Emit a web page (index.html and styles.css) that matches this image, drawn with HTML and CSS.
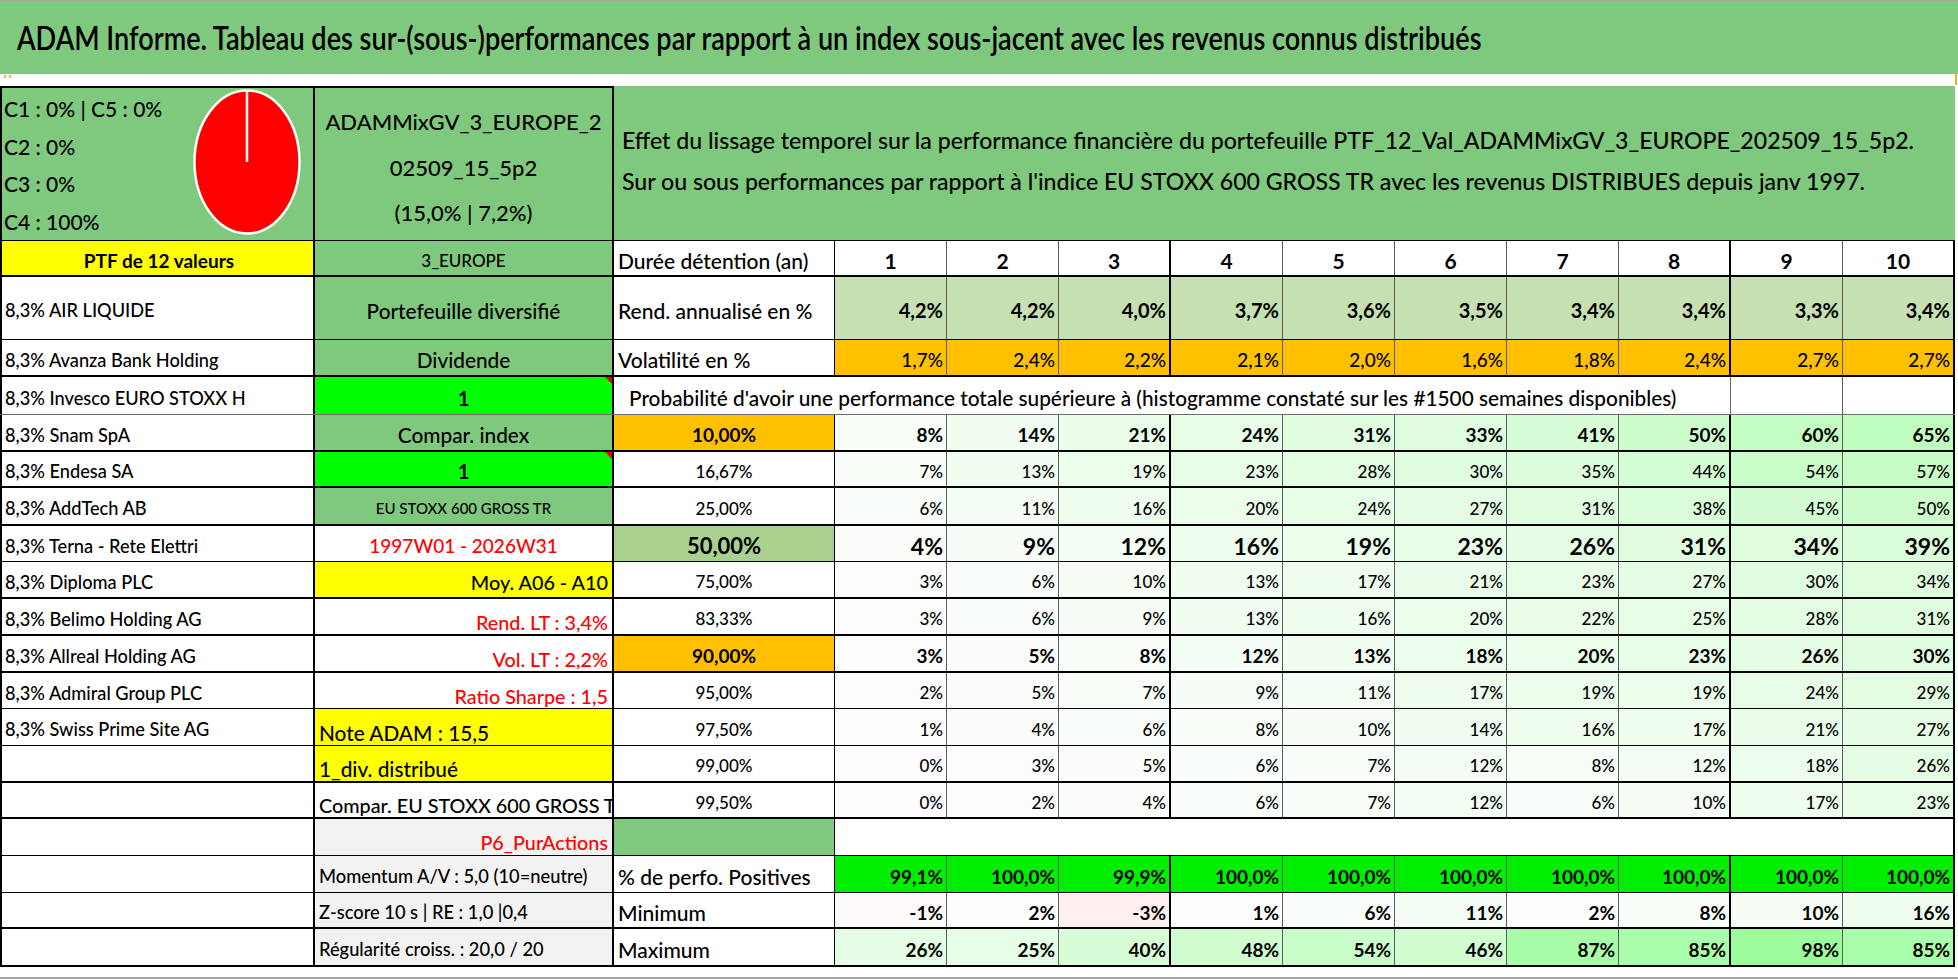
FILE: index.html
```html
<!DOCTYPE html>
<html lang="fr">
<head>
<meta charset="utf-8">
<title>ADAM Informe</title>
<link rel="stylesheet" href="styles.css">
</head>
<body>
<div class="sheet">
  <div class="title"><span class="title-text">ADAM Informe. Tableau des sur-(sous-)performances par rapport à un index sous-jacent avec les revenus connus distribués</span></div>
  <div class="strip"><span class="marks"><i></i><i></i></span><span class="edge"></span></div>

  <div class="head">
    <div class="h-a">
      <div class="classes">
        <div>C1 : 0% | C5 : 0%</div>
        <div>C2 : 0%</div>
        <div>C3 : 0%</div>
        <div>C4 : 100%</div>
      </div>
      <svg class="pie" width="108" height="146" viewBox="0 0 108 146"><ellipse cx="54" cy="73" rx="52.5" ry="71.5" fill="#ff0000" stroke="#ffffff" stroke-width="2.5"/><line x1="54" y1="73" x2="54" y2="2" stroke="#ffffff" stroke-width="2.5"/></svg>
    </div>
    <div class="h-b">ADAMMixGV_3_EUROPE_2<br>02509_15_5p2<br>(15,0% | 7,2%)</div>
    <div class="h-c">Effet du lissage temporel sur la performance financière du portefeuille PTF_12_Val_ADAMMixGV_3_EUROPE_202509_15_5p2.<br>Sur ou sous performances par rapport à l'indice EU STOXX 600 GROSS TR avec les revenus DISTRIBUES depuis janv 1997.</div>
  </div>

  <div class="table">
    <div class="row h36 bk hdr">
      <div class="c a yel ctr ptf">PTF de 12 valeurs</div>
      <div class="c b grn ctr f17">3_EUROPE</div>
      <div class="c lab">Durée détention (an)</div>
      <div class="c n">1</div><div class="c n">2</div><div class="c n t">3</div><div class="c n">4</div><div class="c n">5</div><div class="c n">6</div><div class="c n">7</div><div class="c n t">8</div><div class="c n">9</div><div class="c n t">10</div>
    </div>

    <div class="row h63 tn rend">
      <div class="c a">8,3% AIR LIQUIDE</div>
      <div class="c b grn ctr f21">Portefeuille diversifié</div>
      <div class="c lab">Rend. annualisé en %</div>
      <div class="c n">4,2%</div><div class="c n">4,2%</div><div class="c n t">4,0%</div><div class="c n">3,7%</div><div class="c n">3,6%</div><div class="c n">3,5%</div><div class="c n">3,4%</div><div class="c n t">3,4%</div><div class="c n">3,3%</div><div class="c n t">3,4%</div>
    </div>

    <div class="row h37 bk vol">
      <div class="c a">8,3% Avanza Bank Holding</div>
      <div class="c b grn ctr f21">Dividende</div>
      <div class="c lab">Volatilité en %</div>
      <div class="c n">1,7%</div><div class="c n">2,4%</div><div class="c n t">2,2%</div><div class="c n">2,1%</div><div class="c n">2,0%</div><div class="c n">1,6%</div><div class="c n">1,8%</div><div class="c n t">2,4%</div><div class="c n">2,7%</div><div class="c n t">2,7%</div>
    </div>

    <div class="row h38 tg">
      <div class="c a">8,3% Invesco EURO STOXX H</div>
      <div class="c b lime ctr one note">1</div>
      <div class="c prob">Probabilité d'avoir une performance totale supérieure à (histogramme constaté sur les #1500 semaines disponibles)</div>
      <div class="c n"></div><div class="c n t"></div>
    </div>

    <div class="row h37 bk rb">
      <div class="c a">8,3% Snam SpA</div>
      <div class="c b grn ctr f21">Compar. index</div>
      <div class="c pc org">10,00%</div>
      <div class="c n s" style="--v:8">8%</div><div class="c n s" style="--v:14">14%</div><div class="c n s t" style="--v:21">21%</div><div class="c n s" style="--v:24">24%</div><div class="c n s" style="--v:31">31%</div><div class="c n s" style="--v:33">33%</div><div class="c n s" style="--v:41">41%</div><div class="c n s t" style="--v:50">50%</div><div class="c n s" style="--v:60">60%</div><div class="c n s t" style="--v:65">65%</div>
    </div>

    <div class="row h36 bk rr">
      <div class="c a">8,3% Endesa SA</div>
      <div class="c b lime ctr one note">1</div>
      <div class="c pc">16,67%</div>
      <div class="c n s" style="--v:7">7%</div><div class="c n s" style="--v:13">13%</div><div class="c n s t" style="--v:19">19%</div><div class="c n s" style="--v:23">23%</div><div class="c n s" style="--v:28">28%</div><div class="c n s" style="--v:30">30%</div><div class="c n s" style="--v:35">35%</div><div class="c n s t" style="--v:44">44%</div><div class="c n s" style="--v:54">54%</div><div class="c n s t" style="--v:57">57%</div>
    </div>

    <div class="row h38 bk rr">
      <div class="c a">8,3% AddTech AB</div>
      <div class="c b grn ctr f15">EU STOXX 600 GROSS TR</div>
      <div class="c pc">25,00%</div>
      <div class="c n s" style="--v:6">6%</div><div class="c n s" style="--v:11">11%</div><div class="c n s t" style="--v:16">16%</div><div class="c n s" style="--v:20">20%</div><div class="c n s" style="--v:24">24%</div><div class="c n s" style="--v:27">27%</div><div class="c n s" style="--v:31">31%</div><div class="c n s t" style="--v:38">38%</div><div class="c n s" style="--v:45">45%</div><div class="c n s t" style="--v:50">50%</div>
    </div>

    <div class="row h36 tn rl">
      <div class="c a">8,3% Terna - Rete Elettri</div>
      <div class="c b ctr red f19">1997W01 - 2026W31</div>
      <div class="c pc olive">50,00%</div>
      <div class="c n s" style="--v:4">4%</div><div class="c n s" style="--v:9">9%</div><div class="c n s t" style="--v:12">12%</div><div class="c n s" style="--v:16">16%</div><div class="c n s" style="--v:19">19%</div><div class="c n s" style="--v:23">23%</div><div class="c n s" style="--v:26">26%</div><div class="c n s t" style="--v:31">31%</div><div class="c n s" style="--v:34">34%</div><div class="c n s t" style="--v:39">39%</div>
    </div>

    <div class="row h37 bk rr">
      <div class="c a">8,3% Diploma PLC</div>
      <div class="c b yel rt f20">Moy. A06 - A10</div>
      <div class="c pc">75,00%</div>
      <div class="c n s" style="--v:3">3%</div><div class="c n s" style="--v:6">6%</div><div class="c n s t" style="--v:10">10%</div><div class="c n s" style="--v:13">13%</div><div class="c n s" style="--v:17">17%</div><div class="c n s" style="--v:21">21%</div><div class="c n s" style="--v:23">23%</div><div class="c n s t" style="--v:27">27%</div><div class="c n s" style="--v:30">30%</div><div class="c n s t" style="--v:34">34%</div>
    </div>

    <div class="row h37 bk rr">
      <div class="c a">8,3% Belimo Holding AG</div>
      <div class="c b rt red f20 lo">Rend. LT : 3,4%</div>
      <div class="c pc">83,33%</div>
      <div class="c n s" style="--v:3">3%</div><div class="c n s" style="--v:6">6%</div><div class="c n s t" style="--v:9">9%</div><div class="c n s" style="--v:13">13%</div><div class="c n s" style="--v:16">16%</div><div class="c n s" style="--v:20">20%</div><div class="c n s" style="--v:22">22%</div><div class="c n s t" style="--v:25">25%</div><div class="c n s" style="--v:28">28%</div><div class="c n s t" style="--v:31">31%</div>
    </div>

    <div class="row h37 bk rb">
      <div class="c a">8,3% Allreal Holding AG</div>
      <div class="c b rt red f20 lo">Vol. LT : 2,2%</div>
      <div class="c pc org">90,00%</div>
      <div class="c n s" style="--v:3">3%</div><div class="c n s" style="--v:5">5%</div><div class="c n s t" style="--v:8">8%</div><div class="c n s" style="--v:12">12%</div><div class="c n s" style="--v:13">13%</div><div class="c n s" style="--v:18">18%</div><div class="c n s" style="--v:20">20%</div><div class="c n s t" style="--v:23">23%</div><div class="c n s" style="--v:26">26%</div><div class="c n s t" style="--v:30">30%</div>
    </div>

    <div class="row h36 tn rr">
      <div class="c a">8,3% Admiral Group PLC</div>
      <div class="c b rt red f20 lo">Ratio Sharpe : 1,5</div>
      <div class="c pc">95,00%</div>
      <div class="c n s" style="--v:2">2%</div><div class="c n s" style="--v:5">5%</div><div class="c n s t" style="--v:7">7%</div><div class="c n s" style="--v:9">9%</div><div class="c n s" style="--v:11">11%</div><div class="c n s" style="--v:17">17%</div><div class="c n s" style="--v:19">19%</div><div class="c n s t" style="--v:19">19%</div><div class="c n s" style="--v:24">24%</div><div class="c n s t" style="--v:29">29%</div>
    </div>

    <div class="row h37 tn rr">
      <div class="c a">8,3% Swiss Prime Site AG</div>
      <div class="c b yel f21 lo">Note ADAM : 15,5</div>
      <div class="c pc">97,50%</div>
      <div class="c n s" style="--v:1">1%</div><div class="c n s" style="--v:4">4%</div><div class="c n s t" style="--v:6">6%</div><div class="c n s" style="--v:8">8%</div><div class="c n s" style="--v:10">10%</div><div class="c n s" style="--v:14">14%</div><div class="c n s" style="--v:16">16%</div><div class="c n s t" style="--v:17">17%</div><div class="c n s" style="--v:21">21%</div><div class="c n s t" style="--v:27">27%</div>
    </div>

    <div class="row h37 bk rr">
      <div class="c a"></div>
      <div class="c b yel f21 lo">1_div. distribué</div>
      <div class="c pc">99,00%</div>
      <div class="c n s" style="--v:0">0%</div><div class="c n s" style="--v:3">3%</div><div class="c n s t" style="--v:5">5%</div><div class="c n s" style="--v:6">6%</div><div class="c n s" style="--v:7">7%</div><div class="c n s" style="--v:12">12%</div><div class="c n s" style="--v:8">8%</div><div class="c n s t" style="--v:12">12%</div><div class="c n s" style="--v:18">18%</div><div class="c n s t" style="--v:26">26%</div>
    </div>

    <div class="row h36 bk rr">
      <div class="c a"></div>
      <div class="c b f20 lo">Compar. EU STOXX 600 GROSS TR</div>
      <div class="c pc">99,50%</div>
      <div class="c n s" style="--v:0">0%</div><div class="c n s" style="--v:2">2%</div><div class="c n s t" style="--v:4">4%</div><div class="c n s" style="--v:6">6%</div><div class="c n s" style="--v:7">7%</div><div class="c n s" style="--v:12">12%</div><div class="c n s" style="--v:6">6%</div><div class="c n s t" style="--v:10">10%</div><div class="c n s" style="--v:17">17%</div><div class="c n s t" style="--v:23">23%</div>
    </div>

    <div class="row h37 tn">
      <div class="c a"></div>
      <div class="c b gry rt red f20 lo">P6_PurActions</div>
      <div class="c pc grn"></div>
      <div class="c blank"></div>
    </div>

    <div class="row h37 tn pos">
      <div class="c a"></div>
      <div class="c b gry f18">Momentum A/V : 5,0 (10=neutre)</div>
      <div class="c lab">% de perfo. Positives</div>
      <div class="c n">99,1%</div><div class="c n">100,0%</div><div class="c n t">99,9%</div><div class="c n">100,0%</div><div class="c n">100,0%</div><div class="c n">100,0%</div><div class="c n">100,0%</div><div class="c n t">100,0%</div><div class="c n">100,0%</div><div class="c n t">100,0%</div>
    </div>

    <div class="row h36 bk mm">
      <div class="c a"></div>
      <div class="c b gry f18">Z-score 10 s | RE : 1,0 |0,4</div>
      <div class="c lab">Minimum</div>
      <div class="c n m" style="--v:-1">-1%</div><div class="c n s" style="--v:2">2%</div><div class="c n m t" style="--v:-3">-3%</div><div class="c n s" style="--v:1">1%</div><div class="c n s" style="--v:6">6%</div><div class="c n s" style="--v:11">11%</div><div class="c n s" style="--v:2">2%</div><div class="c n s t" style="--v:8">8%</div><div class="c n s" style="--v:10">10%</div><div class="c n s t" style="--v:16">16%</div>
    </div>

    <div class="row h38 bk mm">
      <div class="c a"></div>
      <div class="c b gry f18">Régularité croiss. : 20,0 / 20</div>
      <div class="c lab">Maximum</div>
      <div class="c n s" style="--v:26">26%</div><div class="c n s" style="--v:25">25%</div><div class="c n s t" style="--v:40">40%</div><div class="c n s" style="--v:48">48%</div><div class="c n s" style="--v:54">54%</div><div class="c n s" style="--v:46">46%</div><div class="c n s" style="--v:87">87%</div><div class="c n s t" style="--v:85">85%</div><div class="c n s" style="--v:98">98%</div><div class="c n s t" style="--v:85">85%</div>
    </div>
  </div>
  <div class="foot"></div>
</div>
</body>
</html>
```

FILE: styles.css
```css
* { box-sizing: border-box; }

body {
  margin: 0;
  background: #ffffff;
  color: #000000;
  font-family: Lato, "Open Sans", "DejaVu Sans", sans-serif;
  font-weight: 500;
}

.sheet { width: 1958px; }

/* ---------- title ---------- */
.title {
  height: 74px;
  background: #7fc97f;
  border-top: 1px solid #a6a6a6;
  display: flex;
  align-items: center;
  padding-left: 17px;
  font-size: 27.1px;
  font-weight: 600;
  white-space: nowrap;
}
.title-text {
  display: inline-block;
  transform: scaleY(1.2);
}

.strip {
  height: 12px;
  display: flex;
  justify-content: space-between;
  align-items: flex-start;
  padding-left: 4px;
  padding-right: 1px;
}
.marks { display: flex; gap: 3px; padding-top: 1px; }
.marks i { display: block; width: 2px; height: 3px; background: #f0b020; transform: skewX(-20deg); }
.edge { width: 2px; height: 11px; background: #f0b020; }

/* ---------- header block ---------- */
.head {
  height: 155px;
  display: grid;
  grid-template-columns: 315px 299px 1341px;
}

.h-a {
  background: #7fc97f;
  border-top: 2px solid #000;
  border-left: 2px solid #000;
  border-right: 2px solid #000;
  border-bottom: 1px solid #000;
  display: grid;
  grid-template-columns: 191px 108px;
  align-items: start;
}
.classes {
  padding: 2px 0 0 2px;
  font-size: 21px;
  line-height: 37.5px;
  white-space: nowrap;
}
.pie { display: block; margin-top: 1px; }

.h-b {
  background: #7fc97f;
  border-top: 2px solid #000;
  border-right: 2px solid #000;
  border-bottom: 1px solid #000;
  display: flex;
  align-items: center;
  justify-content: center;
  text-align: center;
  padding-top: 7px;
  font-size: 22px;
  line-height: 45.5px;
  white-space: nowrap;
}

.h-c {
  background: #7fc97f;
  border-bottom: 1px solid #000;
  display: flex;
  align-items: center;
  padding: 0 0 4px 8px;
  font-size: 23.1px;
  line-height: 41px;
  white-space: nowrap;
}

/* ---------- table ---------- */
.table { width: 1955px; }

.row {
  display: grid;
  grid-template-columns: 315px 299px 221px repeat(10, 112px);
}
.h36 { height: 36px; }
.h37 { height: 37px; }
.h38 { height: 38px; }
.h63 { height: 63px; }
.bk { border-bottom: 2px solid #000; }
.tn { border-bottom: 1px solid #000; }
.tg { border-bottom: 1px solid #6e6e6e; }

.c {
  position: relative;
  display: flex;
  align-items: center;
  min-width: 0;
  overflow: hidden;
  white-space: nowrap;
  padding-top: 4px;
  border-right: 1px solid #000;
}
.c.lo { padding-top: 10px; }

.a {
  border-left: 2px solid #000;
  border-right: 2px solid #000;
  padding-left: 3px;
  font-size: 18.2px;
}
.b {
  border-right: 2px solid #000;
  padding-left: 4px;
  padding-right: 4px;
}
.lab { padding-left: 4px; font-size: 21px; }
.prob {
  grid-column: span 9;
  padding-left: 15px;
  font-size: 20.8px;
  border-right: 1px solid #6e6e6e;
}
.pc { justify-content: center; font-size: 17px; }
.blank { grid-column: span 10; border-right: 2px solid #000; }

.n {
  justify-content: flex-end;
  padding-right: 3px;
  border-right: 1px solid #5c5c5c;
  font-size: 17px;
}
.n.t { border-right: 2px solid #000; }

.ctr { justify-content: center; }
.rt { justify-content: flex-end; }

.f15 { font-size: 15px; }
.f17 { font-size: 17px; }
.f18 { font-size: 18.3px; }
.f19 { font-size: 19px; }
.f20 { font-size: 19.8px; }
.f21 { font-size: 20.8px; }
.ptf { font-size: 19px; font-weight: 700; }
.one { font-size: 20px; font-weight: 700; }
.red { color: #ff0000; }

.grn { background: #7fc97f; }
.lime { background: #00ff00; }
.yel { background: #ffff00; }
.org { background: #ffc000; }
.olive { background: #a9d08e; }
.gry { background: #f2f2f2; }

.note::after {
  content: "";
  position: absolute;
  top: 0;
  right: 0;
  border-style: solid;
  border-width: 0 7px 7px 0;
  border-color: transparent #e00000 transparent transparent;
}

/* colour scales (value passed in --v, percent) */
.s { background: rgb(calc(255 - var(--v) * 1) 253 calc(255 - var(--v) * 1)); }
.m { background: rgb(255 calc(255 + var(--v) * 5) calc(255 + var(--v) * 5)); }

/* row styles */
.hdr .n { justify-content: center; padding: 4px 0 0 0; font-size: 21px; font-weight: 700; }
.rend .n { background: #c6e0b4; font-size: 20px; font-weight: 700; }
.vol .n { background: #ffc000; font-size: 19px; }
.rb .n, .rb .pc { font-size: 19px; font-weight: 700; }
.rl .n { font-size: 23px; font-weight: 700; }
.rl .pc { font-size: 22px; font-weight: 700; }
.pos .n { background: #00ee00; font-size: 19px; font-weight: 700; }
.mm .n { font-size: 19px; font-weight: 700; }

.foot {
  width: 1958px;
  height: 12px;
  border-bottom: 2px solid #a6a6a6;
}
```
